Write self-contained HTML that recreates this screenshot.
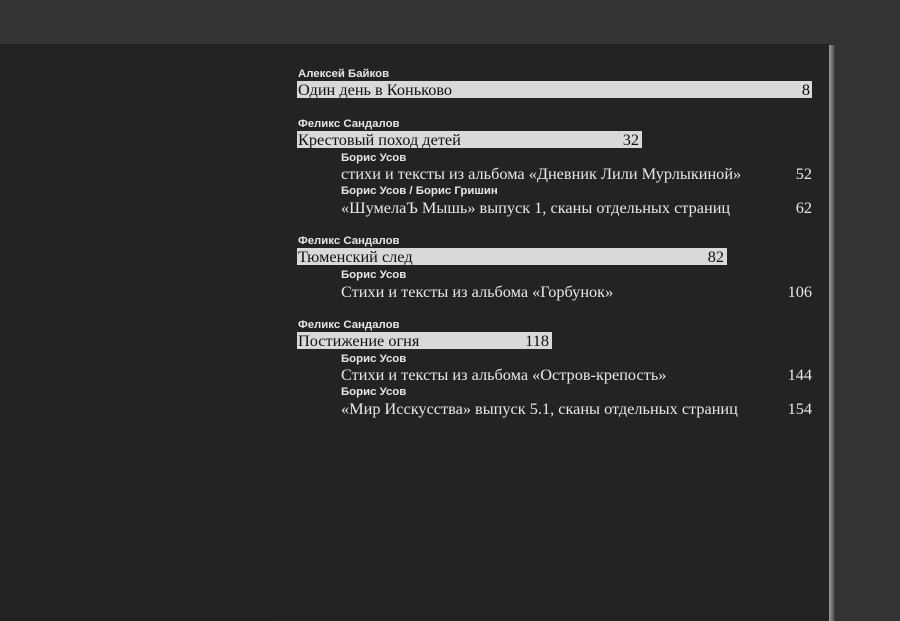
<!DOCTYPE html>
<html><head><meta charset="utf-8"><style>
body{margin:0;width:900px;height:621px;background:#333335;position:relative;overflow:hidden}
.page{position:absolute;left:0;top:44px;width:830px;height:577px;background:#232323}
.lp{position:absolute;left:0;top:44px;width:270px;height:577px;background:#222222}
.edge{position:absolute;left:829px;top:45px;width:6px;height:576px;background:linear-gradient(90deg,#9a9a9a,#6a6a6a 60%,#3a3a3a)}
.a{position:absolute;font-family:"Liberation Sans",sans-serif;font-weight:bold;font-size:11.4px;color:#e6e6e6;line-height:12px}
.t{position:absolute;font-family:"Liberation Serif",serif;font-size:16.3px;color:#e8e8e8;line-height:17px;white-space:nowrap}
.bar{position:absolute;background:#d9d9d9;height:17px}
.bar span{position:absolute;font-family:"Liberation Serif",serif;font-size:16.3px;color:#111;line-height:17px;top:0;white-space:nowrap}
.n{position:absolute;font-family:"Liberation Serif",serif;font-size:16.3px;color:#e8e8e8;line-height:17px;right:88px;text-align:right}
</style></head><body>
<div class="page"></div><div class="lp"></div><div class="edge"></div>

<div class="a" style="left:298px;top:68px">Алексей Байков</div>
<div class="bar" style="left:297px;top:81px;width:515px"><span style="left:1px">Один день в Коньково</span><span style="right:2px">8</span></div>

<div class="a" style="left:298px;top:118px">Феликс Сандалов</div>
<div class="bar" style="left:297px;top:131px;width:345px"><span style="left:1px">Крестовый поход детей</span><span style="right:3px">32</span></div>
<div class="a" style="left:341px;top:152px">Борис Усов</div>
<div class="t" style="left:341px;top:165px">стихи и тексты из альбома «Дневник Лили Мурлыкиной»</div>
<div class="n" style="top:165px">52</div>
<div class="a" style="left:341px;top:185px">Борис Усов / Борис Гришин</div>
<div class="t" style="left:341px;top:199px">«ШумелаЪ Мышь» выпуск 1, сканы отдельных страниц</div>
<div class="n" style="top:199px">62</div>

<div class="a" style="left:298px;top:235px">Феликс Сандалов</div>
<div class="bar" style="left:297px;top:248px;width:430px"><span style="left:1px">Тюменский след</span><span style="right:3px">82</span></div>
<div class="a" style="left:341px;top:269px">Борис Усов</div>
<div class="t" style="left:341px;top:283px">Стихи и тексты из альбома «Горбунок»</div>
<div class="n" style="top:283px">106</div>

<div class="a" style="left:298px;top:319px">Феликс Сандалов</div>
<div class="bar" style="left:297px;top:332px;width:255px"><span style="left:1px">Постижение огня</span><span style="right:3px">118</span></div>
<div class="a" style="left:341px;top:353px">Борис Усов</div>
<div class="t" style="left:341px;top:366px">Стихи и тексты из альбома «Остров-крепость»</div>
<div class="n" style="top:366px">144</div>
<div class="a" style="left:341px;top:386px">Борис Усов</div>
<div class="t" style="left:341px;top:400px">«Мир Исскусства» выпуск 5.1, сканы отдельных страниц</div>
<div class="n" style="top:400px">154</div>
</body></html>
